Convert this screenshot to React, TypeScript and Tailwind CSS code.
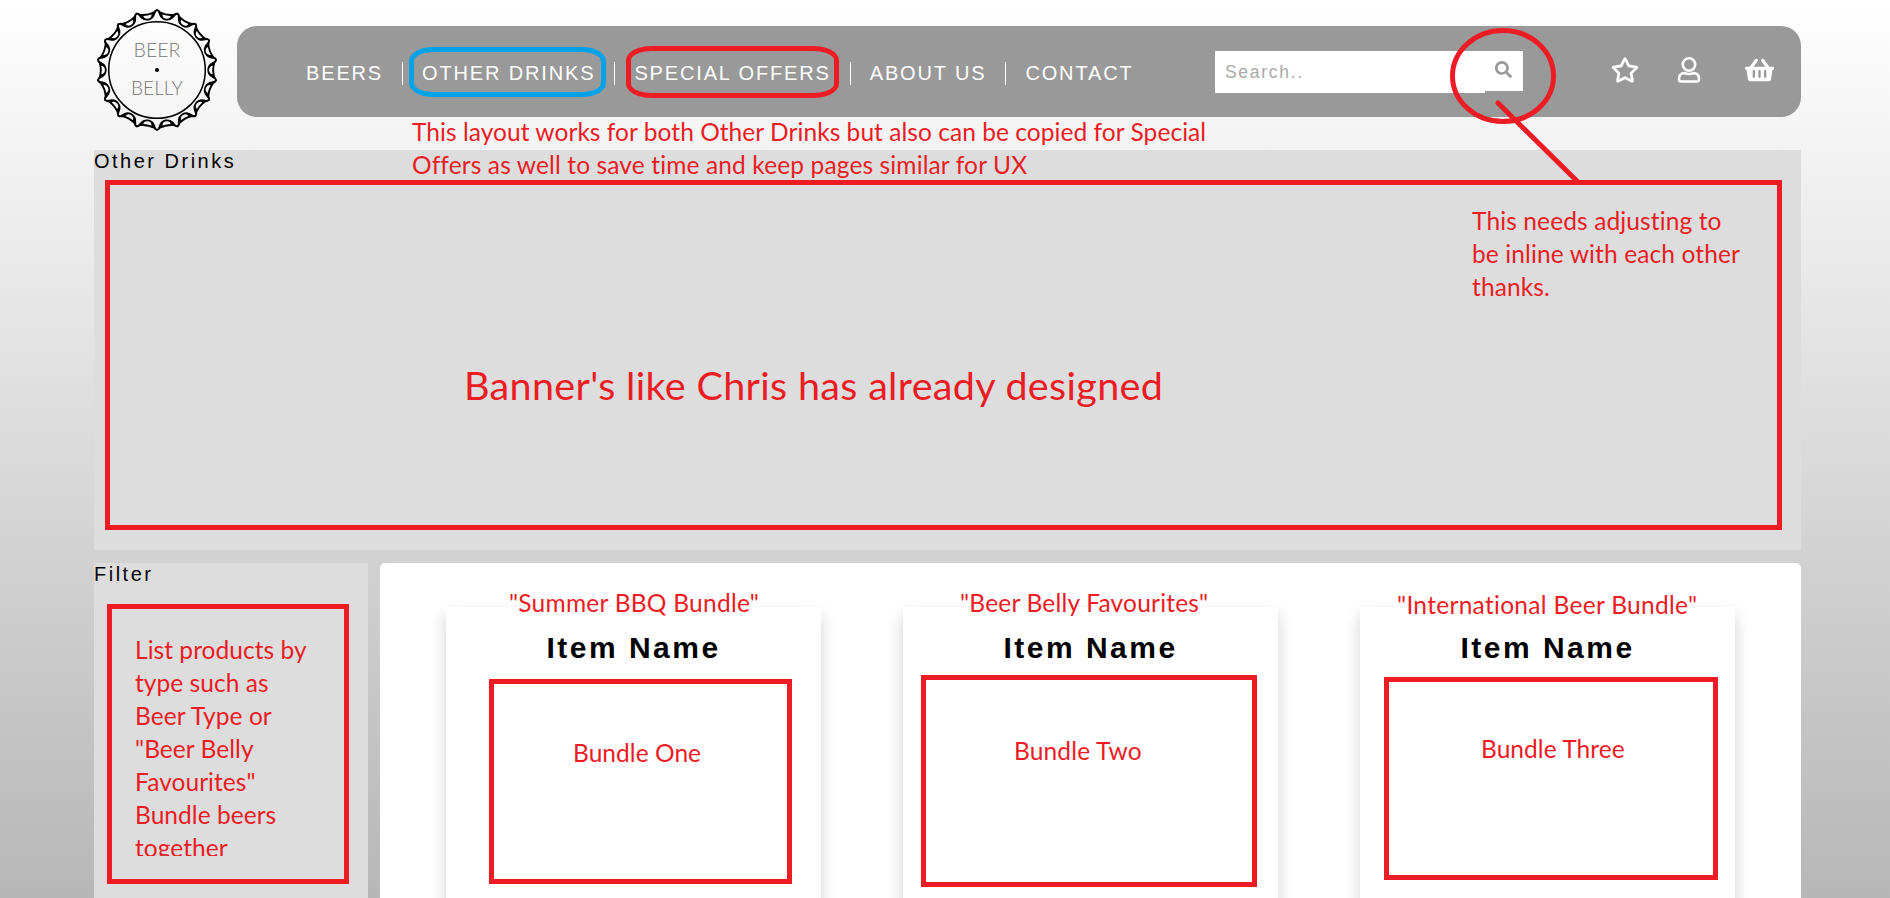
import { FaRegStar, FaShoppingBasket, FaSearch } from 'react-icons/fa';

type NoteProps = { className: string; text: string };

function Note({ className, text }: NoteProps) {
  return (
    <p className={`absolute -mt-px whitespace-pre font-[Lato,sans-serif] text-[24.5px] leading-[33px] tracking-[0.05px] text-[#ed1c24] [font-variant-ligatures:none] ${className}`}>
      {text}
    </p>
  );
}

function Logo() {
  const teeth = Array.from({ length: 18 }, (_, i) => i * 20 + 10);
  return (
    <svg viewBox="-60 -60 120 120" className="h-[122px] w-[122px] tracking-normal" fill="none" stroke="#000">
      <circle r="47.500" strokeWidth="1.5" />
      {teeth.map((a) => (
        <g key={a} transform={`rotate(${a})`}>
          <path d="M-10.200 -58 Q-8.500 -58 -7 -56.300 Q0 -54.300 7 -56.300 Q8.500 -58 10.200 -58" strokeWidth="1.8" strokeLinecap="round" />
          <path
            d="M-10.200 -58.300 L-7 -56.500 Q0 -54.500 7 -56.500 L10.200 -58.300 Q8 -55 6.500 -52.500 Q4 -49.500 0 -49.500 Q-4 -49.500 -6.500 -52.500 Q-8 -55 -10.200 -58.300Z M-4.200 -55.300 Q0 -54 4.200 -55.300 Q4 -51.300 0 -51.200 Q-4 -51.300 -4.200 -55.300Z"
            fill="#000"
            fillRule="evenodd"
            stroke="none"
          />
        </g>
      ))}
      <circle r="2" fill="#000" stroke="none" />
      <text x="0" y="-12.500" textLength="46" lengthAdjust="spacingAndGlyphs" textAnchor="middle" className="fill-[#777] stroke-none font-[Lato,sans-serif] text-[19.500px] font-light">BEER</text>
      <text x="0" y="25" textLength="51" lengthAdjust="spacingAndGlyphs" textAnchor="middle" className="fill-[#777] stroke-none font-[Lato,sans-serif] text-[20px] font-light">BELLY</text>
    </svg>
  );
}

const links = ['BEERS', 'OTHER DRINKS', 'SPECIAL OFFERS', 'ABOUT US', 'CONTACT'];

const boxes = [
  'mt-[21px] ml-[43px] h-[205px] w-[303px]',
  'mt-[17px] ml-[18px] h-[212px] w-[336px]',
  'mt-[19px] ml-[24px] h-[203px] w-[334px]',
];

export default function App() {
  return (
    <div className="relative h-[898px] w-[1890px] overflow-hidden bg-linear-to-b from-white to-[#b7b7b7] pr-[89px] pl-[94px] font-['Liberation_Sans',Arial,sans-serif] text-[20px] leading-[23px] tracking-[2.5px] text-black">
      <header className="flex h-[150px]">
        <div className="-mr-px w-[144px] pt-[9px] pl-[1.5px]"><Logo /></div>
        <div className="mt-[26px] flex h-[91px] flex-1 items-start rounded-[20px] bg-[#999] pl-[50px]">
          <nav className="mt-[36px] flex w-[928px] text-white">
            {links.map((l, i) => (
              <a key={l} className={`px-[19px] tracking-[1.850px] whitespace-nowrap ${i < 4 ? 'border-r border-white' : ''}`}>{l}</a>
            ))}
          </nav>
          <div className="mt-[25px] flex items-start">
            <div className="h-[42px] w-[270px] bg-white pt-[10px] pl-[10px] text-[17.500px] tracking-[1.700px] text-[#a9a9a9]">Search..</div>
            <div className="flex h-[40px] w-[38px] justify-center bg-white pt-[10px] pr-[2px] text-[#999]"><FaSearch size={17} /></div>
          </div>
          <div className="mt-[31px] ml-[88px] flex text-white">
            <FaRegStar size={27} className="h-[26px] w-[28px]" stroke="#fff" strokeWidth="8" />
            <svg width="24" height="26" viewBox="0 0 24 26" className="ml-[38px]" fill="none" stroke="#fff" strokeWidth="2.600">
              <circle cx="12" cy="7.500" r="6.200" />
              <path d="M7 16 Q12 18 17 16 Q22 16.500 22 22 Q22 24.500 20 24.500 H4 Q2 24.500 2 22 Q2 16.500 7 16Z" />
            </svg>
            <FaShoppingBasket size={28} className="ml-[44px] h-[26px] w-[29px]" />
          </div>
        </div>
      </header>

      <section className="h-[400px] bg-[#ddd]">
        <h2 className="h-[30px]">Other Drinks</h2>
        <div className="ml-[11px] h-[350px] w-[1677px] border-5 border-[#ed1c24]" />
      </section>

      <div className="mt-[13px] flex gap-[12px]">
        <aside className="h-[335px] w-[274px] bg-[#ddd]">
          <h2 className="h-[41px]">Filter</h2>
          <div className="ml-[13px] h-[280px] w-[242px] border-5 border-[#ed1c24]" />
        </aside>
        <main className="flex h-[360px] flex-1 gap-[82px] rounded-[5px] bg-white pt-[44px] pl-[66px]">
          {boxes.map((box) => (
            <article key={box} className="h-[400px] w-[375px] bg-white pt-[23px] shadow-[0_8px_16px_rgba(0,0,0,0.18)]">
              <h3 className="h-[28px] text-center text-[30px] leading-[36px] font-bold">Item Name</h3>
              <div className={`border-5 border-[#ed1c24] ${box}`} />
            </article>
          ))}
        </main>
      </div>

      <div className="absolute top-[47px] left-[409px] h-[50px] w-[197px] rounded-[24px/14px] border-5 border-[#00a2e8]" />
      <div className="absolute top-[46px] left-[626px] h-[52px] w-[213px] rounded-[26px/14px] border-5 border-[#ed1c24]" />
      <svg className="absolute top-[20px] left-[1440px]" width="150" height="165" fill="none" stroke="#ed1c24" strokeWidth="5">
        <ellipse cx="63" cy="56" rx="50.500" ry="45.500" />
        <path d="M58 83 L138 162" strokeLinecap="round" />
      </svg>

      <Note className="top-[116px] left-[412px]" text="This layout works for both Other Drinks but also can be copied for Special" />
      <Note className="top-[149px] left-[412px] tracking-[0.13px]!" text="Offers as well to save time and keep pages similar for UX" />
      <Note className="top-[205px] left-[1472px] tracking-[0.12px]!" text={'This needs adjusting to\nbe inline with each other\nthanks.'} />
      <Note className="top-[361px] left-[464px] text-[39.5px]! leading-[50px]! tracking-[0.33px]!" text="Banner's like Chris has already designed" />
      <Note className="top-[634px] left-[135px] h-[223px] overflow-hidden" text={'List products by\ntype such as\nBeer Type or\n"Beer Belly\nFavourites"\nBundle beers\ntogether'} />
      <Note className="top-[587px] left-[509px] tracking-[0.25px]!" text={'"Summer BBQ Bundle"'} />
      <Note className="top-[587px] left-[960px] tracking-[0.2px]!" text={'"Beer Belly Favourites"'} />
      <Note className="top-[589px] left-[1397px] tracking-[0.3px]!" text={'"International Beer Bundle"'} />
      <Note className="top-[737px] left-[573px]" text="Bundle One" />
      <Note className="top-[735px] left-[1014px] tracking-[0.15px]!" text="Bundle Two" />
      <Note className="top-[733px] left-[1481px]" text="Bundle Three" />
    </div>
  );
}
